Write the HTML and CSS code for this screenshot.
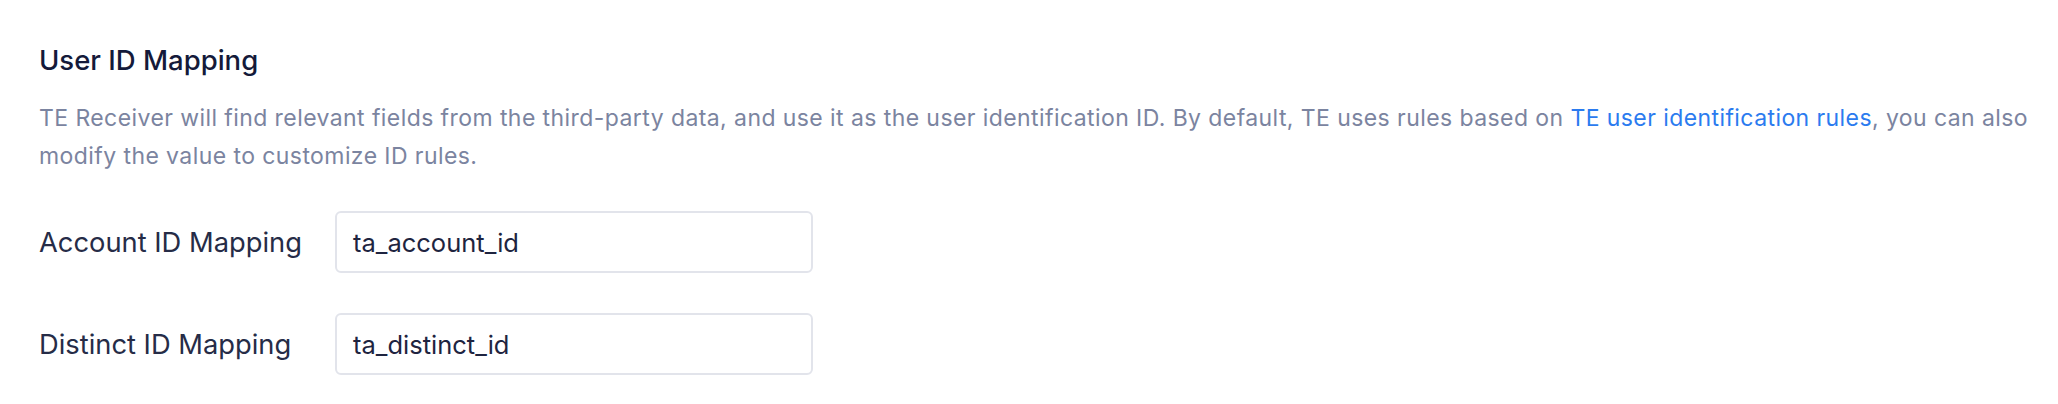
FILE: index.html
```html
<!DOCTYPE html>
<html>
    <head>
        <meta charset="UTF-8">
        <title>User ID Mapping</title>
        <link rel="stylesheet" href="styles.css">
    </head>
    <body>
        <section class="mapping">
            <h3 class="mappingTitle">User ID Mapping</h3>
            <p class="mappingDesc">TE Receiver will find relevant fields from the third-party data, and use it as the user identification ID. By default, TE uses rules based on <a href="#">TE user identification rules</a>, you can also modify the value to customize ID rules.</p>
            <div class="fieldRow">
                <label class="fieldLabel">Account ID Mapping</label>
                <div class="fieldInput">ta_account_id</div>
            </div>
            <div class="fieldRow">
                <label class="fieldLabel">Distinct ID Mapping</label>
                <div class="fieldInput">ta_distinct_id</div>
            </div>
        </section>
    </body>
</html>
```
FILE: styles.css
```css
* { box-sizing: border-box; }

html, body {
    background: #fff;
    margin: 0; padding: 0;
    font-family: Inter, 'Liberation Sans', sans-serif; }

.mapping {
    padding: 40px 14px 0 39px; }

.mappingTitle {
    margin: 0;
    font-weight: 500;
    font-size: 27.5px;
    line-height: 40px;
    color: #141a3a; }

.mappingDesc {
    margin: 19px 0 0 0;
    font-size: 23px;
    letter-spacing: 0.42px;
    line-height: 38px;
    color: #7b84a0; }
.mappingDesc a {
    color: #2b7bef;
    text-decoration: none; }

.fieldRow {
    display: flex;
    align-items: center;
    margin-top: 36px; }
.fieldRow + .fieldRow { margin-top: 40px; }

.fieldLabel {
    width: 296px;
    font-size: 27.3px;
    color: #262c47; }

.fieldInput {
    width: 478px;
    height: 62px;
    display: flex;
    align-items: center;
    padding-left: 16px;
    border: 2px solid #e2e4eb;
    border-radius: 6px;
    font-size: 25.5px;
    color: #1e2440; }
```
